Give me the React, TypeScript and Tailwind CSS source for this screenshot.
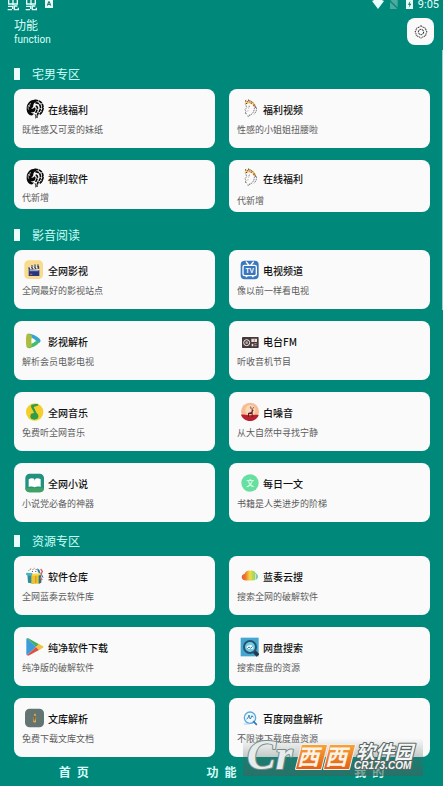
import React from 'react';

interface FeatureItem {
  title: string;
  desc: string;
  icon: React.ReactNode;
  size?: 'regular' | 'short' | 'medium';
}

interface FeatureSection {
  name: string;
  items: FeatureItem[];
}

const Icon: React.FC<{ children: React.ReactNode }> = ({ children }) => (
  <svg viewBox="0 0 60 60" className="w-5 h-5 shrink-0" aria-hidden="true">
    {children}
  </svg>
);

const LionIcon = () => (
  <Icon>
    <path
      d="M34 2C20 1 9 11 8 26c-1 9 2 18 9 22 7 3 12 0 12-5-4 1-7 0-9-3 5 1 10 0 13-4 3-5 2-9-1-11-3 4-7 5-11 3 5-1 7-4 7-9 1-6 4-10 10-11z"
      fill="#0a0a0a"
    />
    <path d="M14 18c-2 5-2 10 0 14M20 12c-3 4-4 8-3 12" stroke="#fafafa" strokeWidth="2" fill="none" />
    <path
      d="M32 4c12-1 21 5 24 15 3 11-1 20-9 27M34 12c8-1 13 3 15 10 2 8-2 14-6 19-3 4-3 9-4 15M35 21c5 1 6 5 5 9-1 5-4 8-5 12"
      stroke="#0a0a0a"
      strokeWidth="5"
      strokeDasharray="11 2"
      fill="none"
    />
    <path d="M54 24l4 5-4 5 1 6-6 3M33 46c3 3 3 8 2 12" stroke="#0a0a0a" strokeWidth="3" fill="none" />
  </Icon>
);

const GirlIcon = () => (
  <Icon>
    <path d="M17 11c3-7 12-9 19-6 9 3 15 11 16 20l-6-1c-4-8-12-12-21-10l-8 3z" fill="#f3dd76" />
    <path
      d="M18 7l5-4M27 3l7 2M37 8l6 4M45 16l4 7M20 15l6-3"
      stroke="#27221c"
      strokeWidth="3"
      strokeDasharray="4 2"
      fill="none"
    />
    <path d="M23 8h5M35 13h4M42 20h4" stroke="#e3496c" strokeWidth="4" />
    <path d="M31 9h3M47 25h4" stroke="#9a58b4" strokeWidth="4" />
    <path
      d="M21 19l2 7-5 6 3 6-3 5 7 2M31 20l-2 8M35 48c7-5 11-12 11-21M52 25c2 8-1 14-7 21M25 51l6 1 2-7"
      stroke="#45484b"
      strokeWidth="2"
      strokeDasharray="5 2"
      fill="none"
    />
    <path d="M24 36l5-1" stroke="#e7948b" strokeWidth="2" />
  </Icon>
);

const ClapperIcon = () => (
  <Icon>
    <rect x="1" y="1" width="56" height="56" rx="13" fill="#f8db8c" />
    <path d="M14 30h32v18H14z" fill="#26377f" />
    <path d="M13 22l32-4 1 8-32 4z" fill="#31406f" />
    <path d="M18 21l4 7M27 20l4 7M36 19l4 7" stroke="#fff" strokeWidth="4" />
    <path d="M17 32h27" stroke="#fff" strokeWidth="2" />
    <path d="M24 15v5M33 13v6M42 13v5" stroke="#26377f" strokeWidth="3" />
    <path d="M18 43h7" stroke="#e86c4f" strokeWidth="3" />
  </Icon>
);

const TvIcon = () => (
  <Icon>
    <rect x="5" y="2" width="54" height="56" rx="12" fill="#3978bd" />
    <path d="M22 6l7 9M43 6l-7 9" stroke="#fff" strokeWidth="4" strokeLinecap="round" />
    <rect x="12" y="16" width="40" height="31" rx="5" fill="none" stroke="#fff" strokeWidth="4" />
    <path d="M20 50h5M39 50h5" stroke="#fff" strokeWidth="4" />
    <text x="32" y="39" textAnchor="middle" fontSize="20" className="font-['Liberation_Sans'] font-bold" fill="#fff">
      TV
    </text>
  </Icon>
);

const PlayIcon = () => (
  <Icon>
    <path d="M8 10c5-4 8-2 13 0v40c-5 2-10 3-13-1-3-9-3-30 0-39z" fill="#b5b945" />
    <path d="M15 8c13 1 29 10 34 18 2 4 0 7-4 10L22 20z" fill="#35a5cd" />
    <path d="M48 30c-5 11-19 19-31 20-4 0-5-3-4-7l20-12z" fill="#46bd68" />
    <path d="M12 11c4-3 8 0 12 4l-1 31c-4 3-8 4-12 2z" fill="#a4bf42" />
    <path d="M23 21c6 2 10 5 12 8-3 4-7 7-12 9-1-6-1-12 0-17z" fill="#fff" />
  </Icon>
);

const RadioIcon = () => (
  <Icon>
    <rect x="9" y="18" width="50" height="33" rx="2" fill="#45383b" />
    <circle cx="23" cy="35" r="9" fill="none" stroke="#f4eeee" strokeWidth="3" />
    <circle cx="23" cy="35" r="4" fill="#b9aaaa" />
    <path d="M37 23h17v10H37zM38 38h5v8h-5z" fill="#e9dfdd" />
    <path d="M46 37h7v3h-7zM46 43h7v3h-7z" fill="#b6a5a4" />
    <path d="M46 24v8" stroke="#b34b48" strokeWidth="2" />
  </Icon>
);

const MusicIcon = () => (
  <Icon>
    <circle cx="32" cy="30" r="26" fill="#f3cf2b" />
    <path d="M22 8l18-3 4 5-15 5 12 25h-7L21 15z" fill="#2f9d48" />
    <ellipse cx="31" cy="43" rx="12" ry="10" fill="#2f9d48" />
  </Icon>
);

const DeerIcon = () => (
  <Icon>
    <circle cx="33" cy="29" r="27" fill="#f6bd94" />
    <circle cx="34" cy="24" r="15" fill="#fbd9b8" />
    <path d="M6 38c12-3 20 3 29 2 10-2 17-3 24-1-3 11-14 18-26 18S9 49 6 38z" fill="#b81f2f" />
    <path d="M27 45V33l10-3 2-8 5 3-3 4v16h-3v-9l-8 1v8z" fill="#60212a" />
    <path d="M39 23l-5-6M40 22l4-7M36 19l-1-6" stroke="#60212a" strokeWidth="2" />
  </Icon>
);

const BookIcon = () => (
  <Icon>
    <rect x="4" y="2" width="56" height="56" rx="13" fill="#23917f" />
    <path d="M4 44h56v2c0 8-5 12-13 12H17C9 58 4 54 4 46z" fill="#3fa264" />
    <path d="M14 19c7-4 13-4 18 0 5-4 11-4 18 0v23c-7-2-13-2-18 1-5-3-11-3-18-1z" fill="#fff" />
    <path d="M32 17v5" stroke="#23917f" strokeWidth="2" />
  </Icon>
);

const DailyIcon = () => (
  <Icon>
    <circle cx="33" cy="30" r="26" fill="#67dfa0" />
    <text x="33" y="38" textAnchor="middle" fontSize="23" className="font-['Noto_Sans_CJK_SC'] font-medium" fill="#e5fff1">
      文
    </text>
  </Icon>
);

const BoxIcon = () => (
  <Icon>
    <path d="M10 24l20 4v25l-18-3z" fill="#2f8d9b" />
    <path d="M22 25h26v28H22z" fill="#eec32f" />
    <path d="M44 24l8-2v28l-8 3z" fill="#2a7584" />
    <path d="M7 20l19 1-4 9-16-3z" fill="#47b5bf" />
    <path d="M25 24l27-3 2 6-29 4z" fill="#f7d748" />
    <path d="M35 29v23" stroke="#d79d24" strokeWidth="4" />
    <path d="M14 14l6-6M25 18l2-8M35 18l2-10" stroke="#49555c" strokeWidth="3" strokeDasharray="3 3" />
    <path d="M42 19l-3-12 7 4 4 12" fill="#3178b5" />
    <path d="M50 9l5 7-4 10M48 35l7 7" stroke="#d3655e" strokeWidth="4" fill="none" />
    <path d="M53 26l4 9" stroke="#3178b5" strokeWidth="3" />
    <path d="M18 10h3M29 7h3" stroke="#e8754b" strokeWidth="3" />
  </Icon>
);

const CloudIcon = () => (
  <Icon>
    <defs>
      <linearGradient id="rainbow">
        <stop offset="0" stopColor="#e25140" />
        <stop offset="0.28" stopColor="#ef8b30" />
        <stop offset="0.5" stopColor="#f5d947" />
        <stop offset="0.75" stopColor="#a6d957" />
        <stop offset="1" stopColor="#57bfc1" />
      </linearGradient>
    </defs>
    <path
      d="M16 43C5 41 6 24 17 23c3-8 11-11 17-9 8-2 14 2 16 8 9 3 9 18-1 20-10 2-24 2-33 1z"
      fill="url(#rainbow)"
    />
    <path d="M18 24v18" stroke="#e4642f" strokeWidth="2" opacity="0.6" />
    <path d="M50 24v18" stroke="#fff" strokeWidth="2" />
  </Icon>
);

const StoreIcon = () => (
  <Icon>
    <path d="M9 4l27 25L9 55c-2-1-2-4-2-7V10c0-3 0-5 2-6z" fill="#3e9bdb" />
    <path d="M9 4c2-2 4-1 7 1l29 17-9 8z" fill="#42ae67" />
    <path d="M45 21l11 6c3 2 3 4 0 6l-11 6-9-10z" fill="#f5c33b" />
    <path d="M36 30l9 9-29 16c-3 2-5 2-7 0z" fill="#dd5144" />
  </Icon>
);

const DiskSearchIcon = () => (
  <Icon>
    <path d="M5 2h54v56H5z" fill="#42a8d1" />
    <path d="M44 42l13 13" stroke="#263947" strokeWidth="11" />
    <circle cx="33" cy="30" r="18" fill="#75c8e4" stroke="#27536d" strokeWidth="6" />
    <path d="M23 31c0-5 5-7 7-5 4-6 11-1 10 3 5 1 4 7 0 7H27c-3 0-4-3-4-5z" fill="#e7faff" />
    <path d="M25 35l5-5 5 4 5-5" stroke="#2c86b3" strokeWidth="3" fill="none" />
  </Icon>
);

const LibraryIcon = () => (
  <Icon>
    <rect x="3" y="2" width="57" height="56" rx="14" fill="#627572" />
    <path d="M30 17h6v8h-6z" fill="#d99b49" />
    <path d="M27 27h10v7H27z" fill="#9b8850" />
    <path d="M28 34h8v9h-8z" fill="#eeb04b" />
    <path d="M32 24v15" stroke="#594f40" strokeWidth="2" />
  </Icon>
);

const DiskParseIcon = () => (
  <Icon>
    <circle cx="33" cy="29" r="17" fill="#eff8fd" stroke="#5ca7dc" strokeWidth="4" />
    <path d="M44 41l8 8" stroke="#3977b5" strokeWidth="5" strokeLinecap="round" />
    <path d="M23 34l6-8 5 7 5-10 4 5" stroke="#397eb5" strokeWidth="3" fill="none" />
    <circle cx="30" cy="24" r="3" fill="#397eb5" />
    <path d="M14 48h18" stroke="#a9d3ee" strokeWidth="3" />
  </Icon>
);

const sections: FeatureSection[] = [
  {
    name: '宅男专区',
    items: [
      { title: '在线福利', desc: '既性感又可爱的妹纸', icon: <LionIcon /> },
      { title: '福利视频', desc: '性感的小姐姐扭腰啦', icon: <GirlIcon /> },
      { title: '福利软件', desc: '代新增', icon: <LionIcon />, size: 'short' },
      { title: '在线福利', desc: '代新增', icon: <GirlIcon />, size: 'medium' },
    ],
  },
  {
    name: '影音阅读',
    items: [
      { title: '全网影视', desc: '全网最好的影视站点', icon: <ClapperIcon /> },
      { title: '电视频道', desc: '像以前一样看电视', icon: <TvIcon /> },
      { title: '影视解析', desc: '解析会员电影电视', icon: <PlayIcon /> },
      { title: '电台FM', desc: '听收音机节目', icon: <RadioIcon /> },
      { title: '全网音乐', desc: '免费听全网音乐', icon: <MusicIcon /> },
      { title: '白噪音', desc: '从大自然中寻找宁静', icon: <DeerIcon /> },
      { title: '全网小说', desc: '小说党必备的神器', icon: <BookIcon /> },
      { title: '每日一文', desc: '书籍是人类进步的阶梯', icon: <DailyIcon /> },
    ],
  },
  {
    name: '资源专区',
    items: [
      { title: '软件仓库', desc: '全网蓝奏云软件库', icon: <BoxIcon /> },
      { title: '蓝奏云搜', desc: '搜索全网的破解软件', icon: <CloudIcon /> },
      { title: '纯净软件下载', desc: '纯净版的破解软件', icon: <StoreIcon /> },
      { title: '网盘搜索', desc: '搜索度盘的资源', icon: <DiskSearchIcon /> },
      { title: '文库解析', desc: '免费下载文库文档', icon: <LibraryIcon /> },
      { title: '百度网盘解析', desc: '不限速下载度盘资源', icon: <DiskParseIcon /> },
    ],
  },
];

const cardSizes = {
  regular: 'pt-[10px] pb-[10px] gap-[3px]',
  short: 'pt-2 pb-[3px] gap-[2px]',
  medium: 'pt-2 pb-[3px] gap-[5px]',
};

const FeatureCard: React.FC<{ item: FeatureItem }> = ({ item }) => (
  <button
    type="button"
    className={`flex flex-col items-start self-start min-w-0 px-2 rounded-lg bg-[#fafafa] text-left ${cardSizes[item.size ?? 'regular']}`}
  >
    <span className="flex items-center gap-1 pl-[2px] h-5 text-[10px] font-medium text-[#111111]">
      {item.icon}
      {item.title}
    </span>
    <span className="text-[9px] leading-4 text-[#5c5c5c]">{item.desc}</span>
  </button>
);

const StatusBar = () => (
  <div className="flex items-start justify-between h-3 pl-[7px] pr-1">
    <div className="flex items-start gap-[6px]">
      {[0, 1].map((n) => (
        <svg key={n} viewBox="0 0 36 33" className="w-3 h-[11px]" fill="none" stroke="#e6fffb" strokeWidth="4" aria-hidden="true">
          <path d="M5 0v12h26V0M18 0v16M3 19h14v8M2 29h13M22 16v13h12v-6M22 18h9" />
        </svg>
      ))}
      <svg viewBox="0 0 24 24" className="w-2 h-2 ml-[2px]" aria-hidden="true">
        <path d="M0 0h24v24H0z" fill="#e6fffb" />
        <path d="M7 17l4-12h2l4 12M9 13h6" fill="none" stroke="#17675f" strokeWidth="3" />
      </svg>
    </div>
    <div className="flex items-start">
      <svg viewBox="0 0 36 27" className="w-3 h-[9px]" aria-hidden="true">
        <path d="M0 3Q18-7 36 3L18 27z" fill="#e8fffc" />
      </svg>
      <svg viewBox="0 0 24 27" className="w-2 h-[9px] ml-[6px]" aria-hidden="true">
        <path d="M0 4l6-6h17v29H0z" fill="#4caa9e" />
        <path d="M0 3l24 23" stroke="#00897b" strokeWidth="4" />
      </svg>
      <svg viewBox="0 0 21 27" className="w-[7px] h-[9px] ml-2" aria-hidden="true">
        <path d="M0 0h21v27H0z" fill="#e8fffc" />
        <path d="M13 2L6 14h5l-3 10 8-13h-5z" fill="#00695e" />
      </svg>
      <span className="ml-[5px] font-[Roboto,sans-serif] text-[11px] leading-[10px] text-[#e6fffb]">9:05</span>
    </div>
  </div>
);

const Header = () => (
  <header className="flex items-start justify-between pl-[14px] pr-[9px] pt-[6px]">
    <div className="text-[#dcfff9]">
      <h1 className="text-xs leading-[14px]">功能</h1>
      <p className="font-[Roboto,sans-serif] text-[10px] leading-4">function</p>
    </div>
    <button
      type="button"
      aria-label="设置"
      className="flex items-center justify-center w-[27px] h-[27px] rounded-lg bg-[#fafafa]"
    >
      <svg viewBox="0 0 42 42" className="w-[14px] h-[14px]" fill="none" stroke="#222" strokeWidth="3" aria-hidden="true">
        <path d="M21 2l5 4 9 4 1 6 3 5-3 5-1 6-9 4-5 4-5-4-9-4-1-6-3-5 3-5 1-6 9-4z" strokeDasharray="4 2" />
        <circle cx="21" cy="21" r="8" strokeDasharray="6 2" />
      </svg>
    </button>
  </header>
);

const Watermark = () => (
  <svg
    viewBox="0 0 180 38"
    className="absolute right-5 bottom-[10px] w-[180px] h-[38px] overflow-visible pointer-events-none"
    aria-hidden="true"
  >
    <defs>
      <linearGradient id="shade" x1="0" y1="0" x2="0" y2="1">
        <stop offset="0" stopColor="#53665f" stopOpacity="0" />
        <stop offset="1" stopColor="#3f645d" stopOpacity="0.65" />
      </linearGradient>
      <linearGradient id="orange" x1="0" y1="0" x2="0" y2="1">
        <stop offset="0" stopColor="#f7a23b" />
        <stop offset="1" stopColor="#e35f18" />
      </linearGradient>
    </defs>
    <path d="M0 0h180v38H0z" fill="url(#shade)" />
    <g paintOrder="stroke" strokeLinejoin="round">
      <text
        x="4"
        y="31"
        fontSize="43"
        className="font-['Liberation_Serif'] font-bold italic"
        fill="#e4ecec"
        stroke="#7c8987"
        strokeWidth="2"
      >
        Cr
      </text>
      <path
        d="M59 7h25l-6 24H53zM87 7h25l-6 24H81z"
        fill="url(#orange)"
        stroke="#f7eee5"
        strokeWidth="2"
      />
      <text
        x="54"
        y="27"
        fontSize="22"
        className="font-['Noto_Sans_CJK_SC'] font-bold italic"
        fill="#fdf3e4"
      >
        西
        <tspan x="82">西</tspan>
      </text>
      <g fill="#f4f7f6" stroke="#596461" strokeWidth="2">
        <text x="113" y="21" fontSize="19" className="font-['Noto_Sans_CJK_SC'] font-bold italic">
          软件园
        </text>
        <text x="111" y="31" fontSize="10" className="font-['Liberation_Sans'] font-bold italic">
          CR173.COM
        </text>
      </g>
    </g>
  </svg>
);

const App: React.FC = () => (
  <div className="relative min-h-screen flex flex-col bg-[#00897b] font-['Noto_Sans_CJK_SC',sans-serif]">
    <StatusBar />
    <Header />
    <main className="flex flex-col gap-[11px] pl-[14px] pr-[13px] pt-[18px]">
      {sections.map((section) => (
        <section key={section.name} className="first:mb-1">
          <h2 className="flex items-center gap-3 mb-[7px] text-xs leading-4 text-[#c8fff8]">
            <span className="w-[6px] h-3 bg-[#e8fffc]" />
            {section.name}
          </h2>
          <div className="grid grid-cols-2 gap-x-[14px] gap-y-3">
            {section.items.map((item, i) => (
              <FeatureCard key={i} item={item} />
            ))}
          </div>
        </section>
      ))}
    </main>
    <nav className="flex flex-1 items-center">
      {['首\u2002页', '功\u2002能', '我\u2002的'].map((tab) => (
        <button key={tab} type="button" className="flex-1 text-xs leading-4 font-bold text-[#d8fff9]">
          {tab}
        </button>
      ))}
    </nav>
    <Watermark />
    <div className="absolute right-0 top-[50px] w-px h-[260px] bg-[#9ccfc8]" />
  </div>
);

export default App;
